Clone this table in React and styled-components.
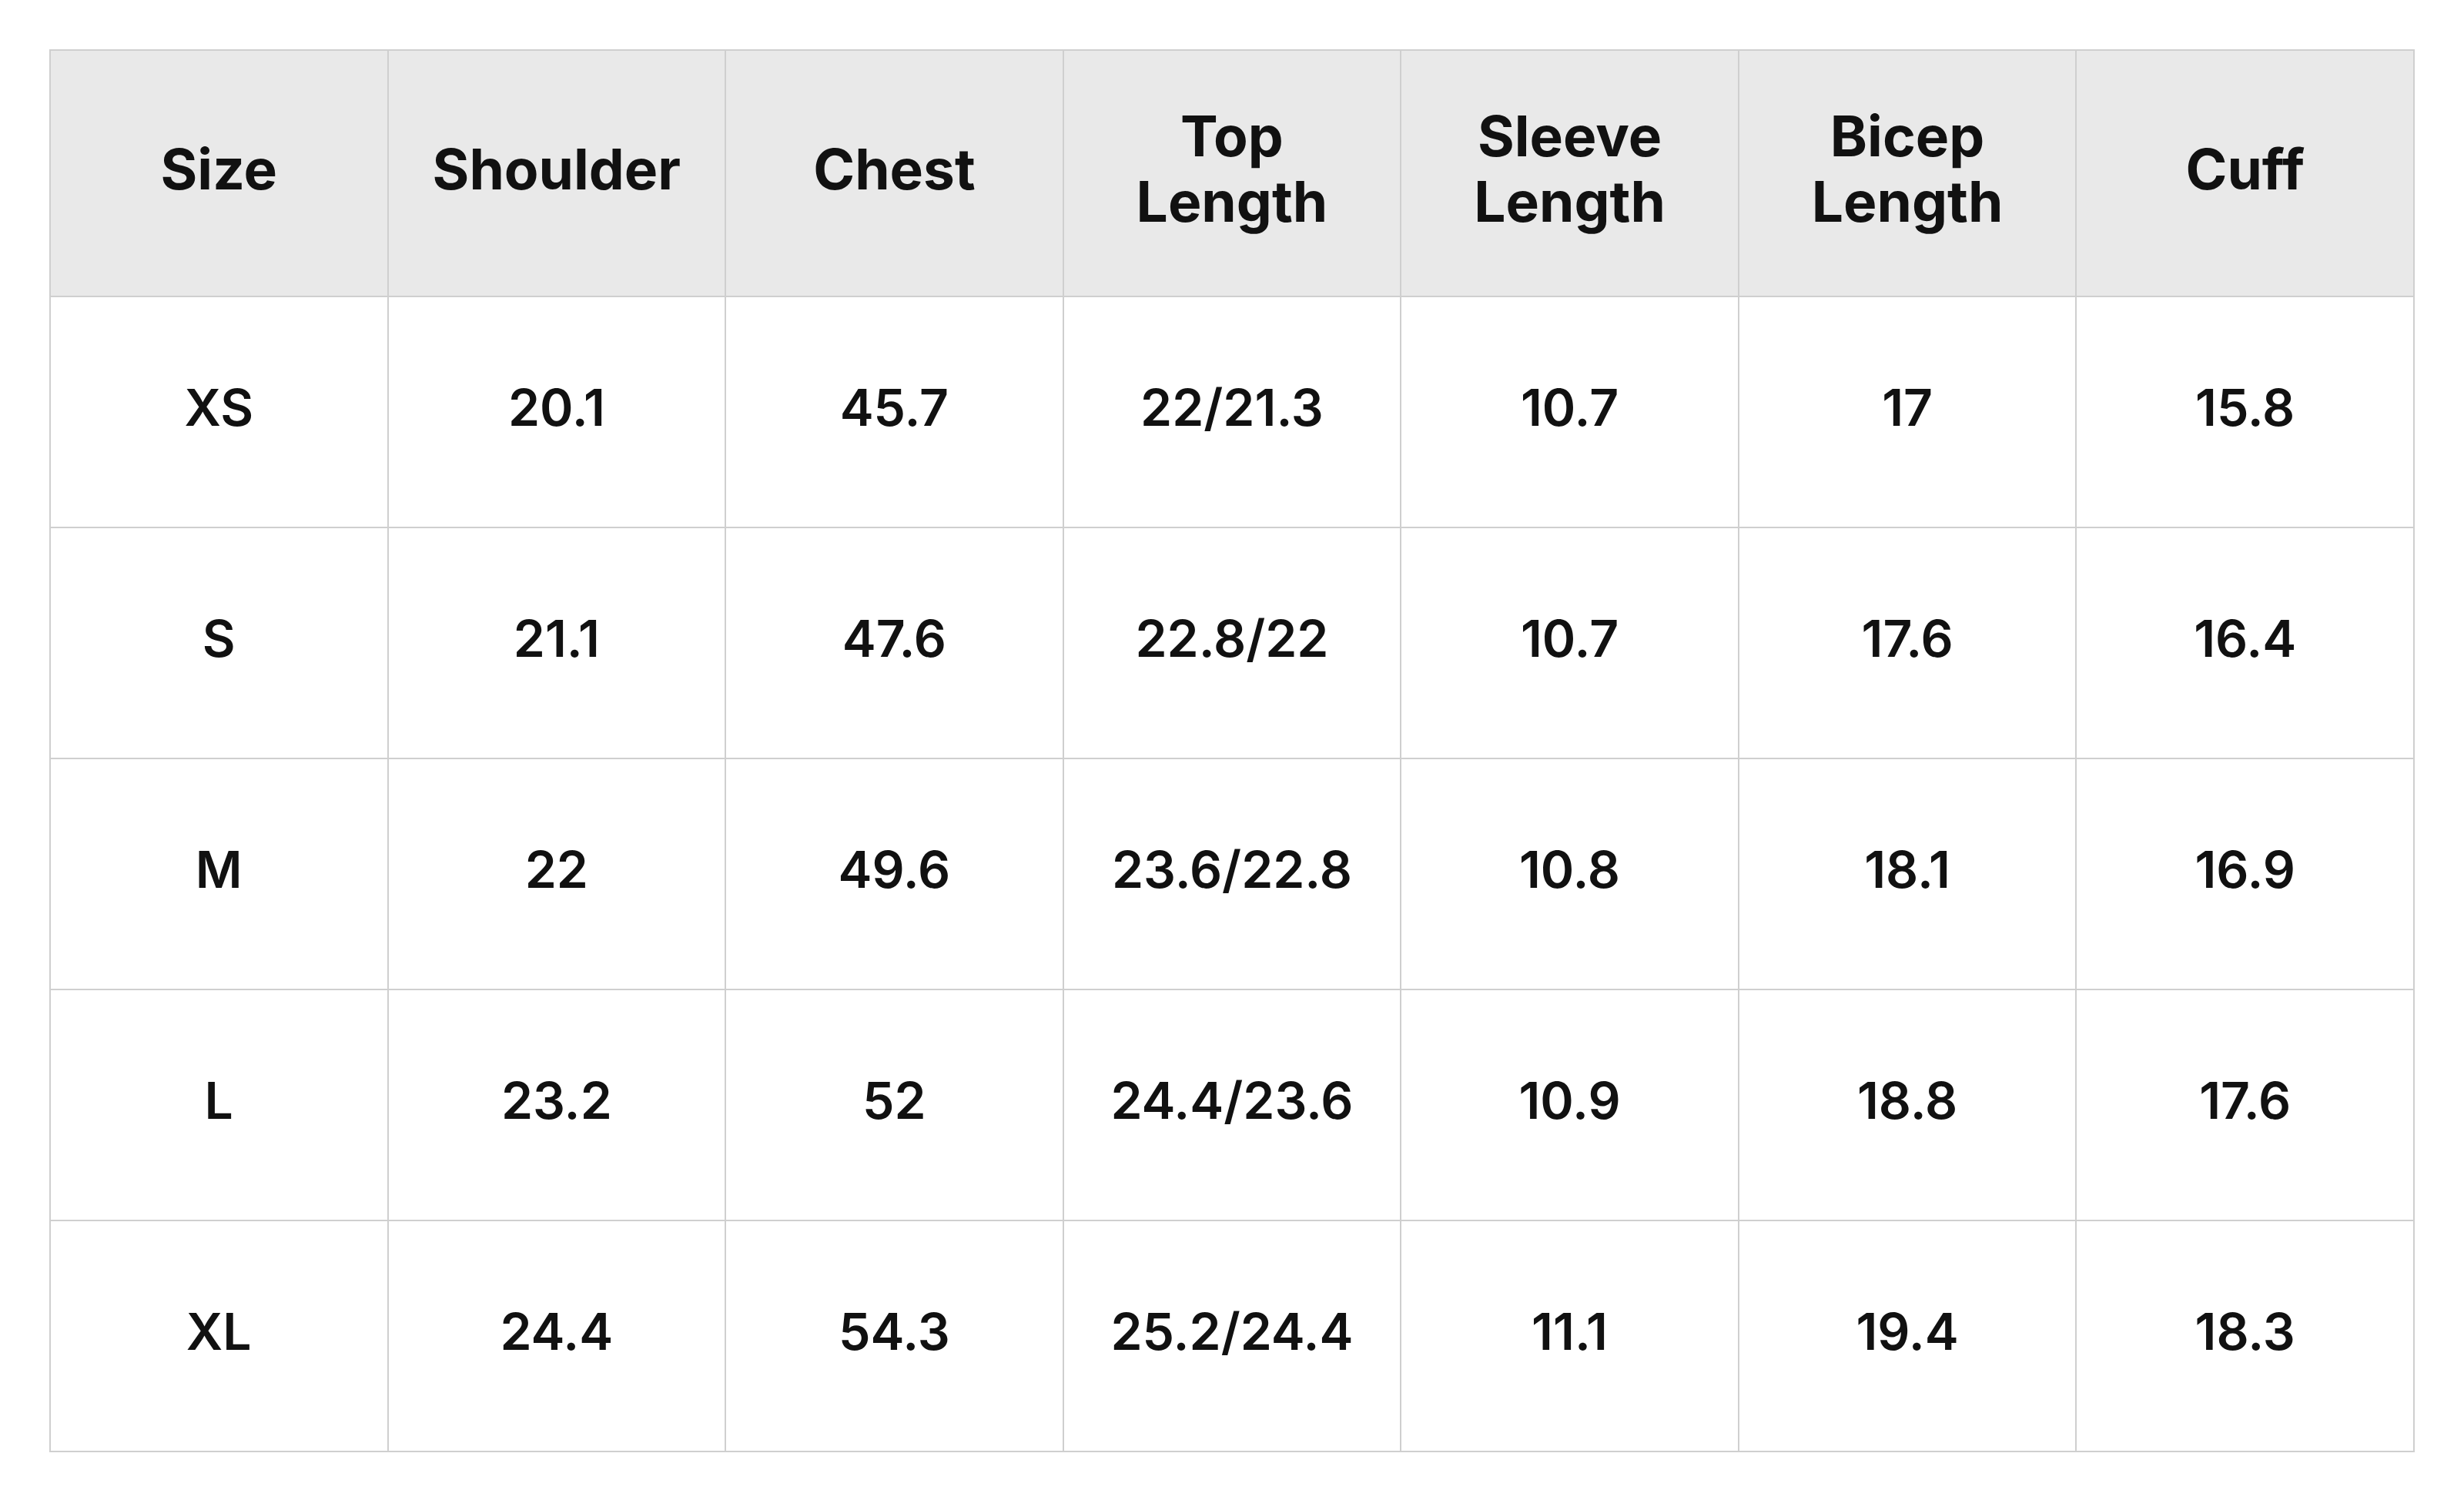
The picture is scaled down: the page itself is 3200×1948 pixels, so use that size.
import React from 'react';
import styled, { createGlobalStyle } from 'styled-components';

const GlobalStyle = createGlobalStyle`
  html, body {
    margin: 0;
    padding: 0;
    background: #ffffff;
  }
  body {
    font-family: Inter, "Noto Sans", "Liberation Sans", sans-serif;
    color: #111111;
  }
`;

const Page = styled.div`
  box-sizing: border-box;
  width: 3200px;
  height: 1948px;
  padding: 64px;
  background: #ffffff;
`;

const Table = styled.table`
  width: 3072px;
  table-layout: fixed;
  border-collapse: collapse;
`;

const HeadCell = styled.th`
  box-sizing: border-box;
  height: 320px;
  padding: 0 24px 12px;
  background: #e9e9e9;
  border: 2px solid #cfcfcf;
  font-size: 73px;
  font-weight: 700;
  line-height: 85px;
  text-align: center;
  vertical-align: middle;
  color: #111111;
`;

const Cell = styled.td`
  box-sizing: border-box;
  height: 300px;
  padding: 0 16px 12px;
  border: 2px solid #cfcfcf;
  font-size: 66px;
  font-weight: 600;
  text-align: center;
  vertical-align: middle;
  color: #111111;
`;

const columns = [
  ['Size'],
  ['Shoulder'],
  ['Chest'],
  ['Top', 'Length'],
  ['Sleeve', 'Length'],
  ['Bicep', 'Length'],
  ['Cuff'],
];

const rows = [
  ['XS', '20.1', '45.7', '22/21.3', '10.7', '17', '15.8'],
  ['S', '21.1', '47.6', '22.8/22', '10.7', '17.6', '16.4'],
  ['M', '22', '49.6', '23.6/22.8', '10.8', '18.1', '16.9'],
  ['L', '23.2', '52', '24.4/23.6', '10.9', '18.8', '17.6'],
  ['XL', '24.4', '54.3', '25.2/24.4', '11.1', '19.4', '18.3'],
];

export default function App() {
  return (
    <Page>
      <GlobalStyle />
      <Table>
        <thead>
          <tr>
            {columns.map((lines) => (
              <HeadCell key={lines.join(' ')}>
                {lines.map((line, i) => (
                  <React.Fragment key={line}>
                    {i > 0 && <br />}
                    {line}
                  </React.Fragment>
                ))}
              </HeadCell>
            ))}
          </tr>
        </thead>
        <tbody>
          {rows.map((row) => (
            <tr key={row[0]}>
              {row.map((value, i) => (
                <Cell key={i}>{value}</Cell>
              ))}
            </tr>
          ))}
        </tbody>
      </Table>
    </Page>
  );
}
